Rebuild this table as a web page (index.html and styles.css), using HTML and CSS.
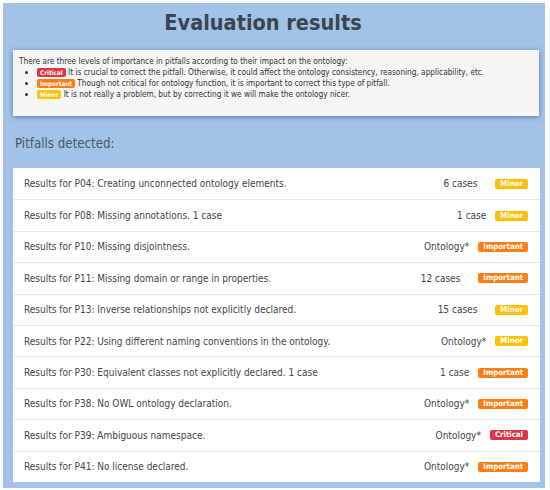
FILE: index.html
```html
<!DOCTYPE html>
<html>
<head>
<meta charset="utf-8">
<link rel="stylesheet" href="styles.css">
</head>
<body>
<div class="panel">
  <h1 class="title">Evaluation results</h1>
  <div class="notes">
    <p class="intro">There are three levels of importance in pitfalls according to their impact on the ontology:</p>
    <ul class="levels">
      <li><span class="badge critical">Critical</span> It is crucial to correct the pitfall. Otherwise, it could affect the ontology consistency, reasoning, applicability, etc.</li>
      <li><span class="badge important">Important</span> Though not critical for ontology function, it is important to correct this type of pitfall.</li>
      <li><span class="badge minor">Minor</span> It is not really a problem, but by correcting it we will make the ontology nicer.</li>
    </ul>
  </div>
  <h2 class="subtitle">Pitfalls detected:</h2>
  <ul class="results">
    <li class="row"><span class="label">Results for P04: Creating unconnected ontology elements.</span><span class="count plural">6 cases</span><span class="badge minor">Minor</span></li>
    <li class="row"><span class="label">Results for P08: Missing annotations. 1 case</span><span class="count">1 case</span><span class="badge minor">Minor</span></li>
    <li class="row"><span class="label">Results for P10: Missing disjointness.</span><span class="count">Ontology*</span><span class="badge important">Important</span></li>
    <li class="row"><span class="label">Results for P11: Missing domain or range in properties.</span><span class="count plural">12 cases</span><span class="badge important">Important</span></li>
    <li class="row"><span class="label">Results for P13: Inverse relationships not explicitly declared.</span><span class="count plural">15 cases</span><span class="badge minor">Minor</span></li>
    <li class="row"><span class="label">Results for P22: Using different naming conventions in the ontology.</span><span class="count">Ontology*</span><span class="badge minor">Minor</span></li>
    <li class="row"><span class="label">Results for P30: Equivalent classes not explicitly declared. 1 case</span><span class="count">1 case</span><span class="badge important">Important</span></li>
    <li class="row"><span class="label">Results for P38: No OWL ontology declaration.</span><span class="count">Ontology*</span><span class="badge important">Important</span></li>
    <li class="row"><span class="label">Results for P39: Ambiguous namespace.</span><span class="count">Ontology*</span><span class="badge critical">Critical</span></li>
    <li class="row"><span class="label">Results for P41: No license declared.</span><span class="count">Ontology*</span><span class="badge important">Important</span></li>
  </ul>
</div>
</body>
</html>
```

FILE: styles.css
```css
html, body {
  margin: 0;
  padding: 0;
  background: #ffffff;
}
body {
  font-family: "DejaVu Sans Condensed", "DejaVu Sans", sans-serif;
  color: #444;
}
.panel {
  margin: 3px 5px 2px 3px;
  height: 485px;
  box-sizing: border-box;
  background: #a3c2e8;
  padding: 0 6px 0 10px;
  display: flex;
  flex-direction: column;
}
.title {
  margin: 0;
  height: 47px;
  line-height: 40px;
  text-align: center;
  padding-right: 26px;
  font-size: 21.5px;
  font-weight: bold;
  color: #3b4550;
}
.notes {
  background: #f5f5f5;
  height: 66px;
  box-sizing: border-box;
  padding: 6px 6px;
  box-shadow: 0 1px 5px rgba(40, 60, 110, 0.55);
  font-size: 8.2px;
  color: #333;
}
.intro {
  margin: 0;
  line-height: 11px;
}
.levels {
  margin: 0;
  padding-left: 18px;
  list-style: disc;
}
.levels li {
  line-height: 11px;
}
.badge {
  display: inline-block;
  color: #fff;
  font-weight: bold;
  border-radius: 2px;
  text-align: center;
}
.levels .badge {
  font-size: 6.3px;
  line-height: 9px;
  padding: 0 3px;
  vertical-align: 0.5px;
}
.critical { background: #dc3545; }
.important { background: #fd7e14; }
.minor { background: #ffc107; }
.subtitle {
  margin: 0;
  height: 52px;
  line-height: 55px;
  font-size: 13.2px;
  font-weight: normal;
  color: #4b5866;
  padding-left: 2px;
}
.results {
  margin: 0;
  padding: 0;
  list-style: none;
  background: #fff;
  width: 527px;
}
.row {
  display: flex;
  align-items: center;
  height: 31.4px;
  box-sizing: border-box;
  padding: 0 12px 0 11px;
  border-top: 1px solid #e6e6e6;
  font-size: 10px;
  color: #444;
}
.row:first-child {
  border-top: none;
}
.label {
  flex: 1;
}
.count {
  margin-right: 9px;
}
.count.plural {
  margin-right: 18px;
}
.results .badge {
  font-size: 7.8px;
  line-height: 10px;
  padding: 0 5px;
}
```
